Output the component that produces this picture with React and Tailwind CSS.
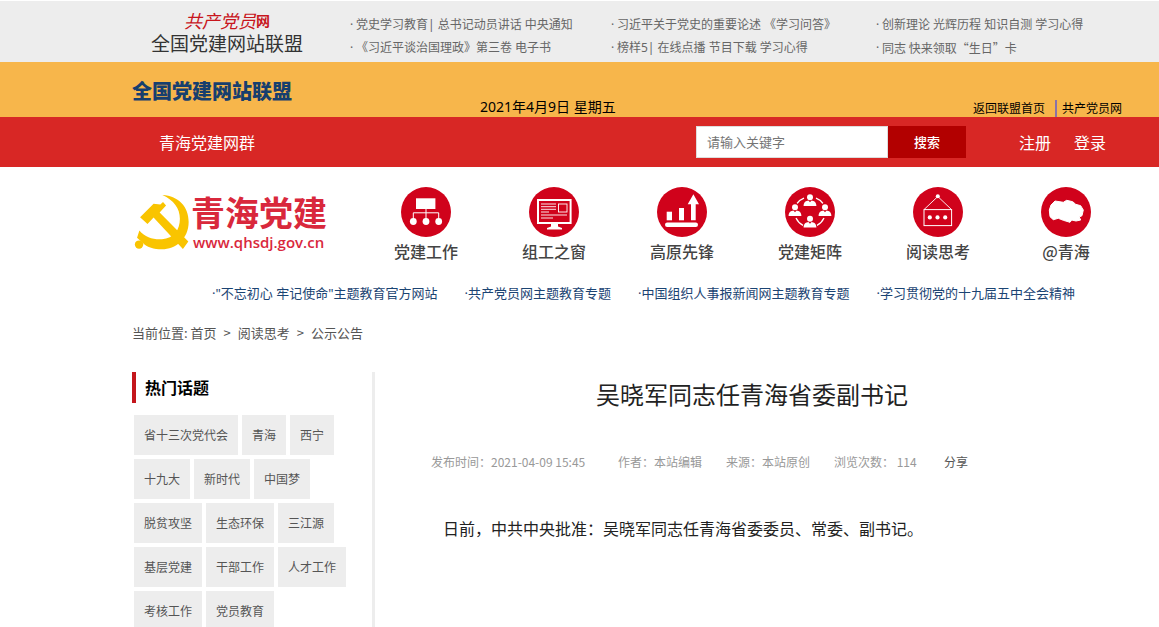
const topLinks = [
  ["党史学习教育| 总书记动员讲话 中央通知", "《习近平谈治国理政》第三卷 电子书"],
  ["习近平关于党史的重要论述 《学习问答》", "榜样5| 在线点播 节目下载 学习心得"],
  ["创新理论 光辉历程 知识自测 学习心得", "同志 快来领取“生日”卡"],
];

const themeLinks = [
  '"不忘初心 牢记使命"主题教育官方网站',
  "共产党员网主题教育专题",
  "中国组织人事报新闻网主题教育专题",
  "学习贯彻党的十九届五中全会精神",
];

const topics = [
  "省十三次党代会",
  "青海",
  "西宁",
  "十九大",
  "新时代",
  "中国梦",
  "脱贫攻坚",
  "生态环保",
  "三江源",
  "基层党建",
  "干部工作",
  "人才工作",
  "考核工作",
  "党员教育",
];

const Person = ({ x, y }) => (
  <g transform={`translate(${x} ${y})`}>
    <circle cx="0" cy="-3.4" r="4.2" fill="#d0021b" />
    <circle cx="0" cy="-3.2" r="3" fill="#fff" />
    <path d="M-6.4 5.4C-6.4 1.6-3.8.2-1.6 0L0 1.8 1.6 0C3.8.2 6.4 1.6 6.4 5.4z" fill="#fff" />
  </g>
);

const navItems = [
  {
    label: "党建工作",
    icon: (
      <>
        <rect x="15" y="11.3" width="19.4" height="10.7" fill="#fff" />
        <path d="M12.3 32v-6.2h25.4V32M25 21v11" fill="none" stroke="#fff" strokeWidth="1" />
        <circle cx="12.3" cy="34.5" r="3.4" fill="#fff" />
        <circle cx="25" cy="34.5" r="3.4" fill="#fff" />
        <circle cx="37.7" cy="34.5" r="3.4" fill="#fff" />
      </>
    ),
  },
  {
    label: "组工之窗",
    icon: (
      <>
        <rect x="9" y="13" width="32.6" height="23" fill="none" stroke="#fff" strokeWidth="2" />
        <path d="M22 36h7v3.5l4 1.5v1.4H18V41l4-1.5z" fill="#fff" />
        <path d="M12 17h15M12 19.7h15M12 22.3h15M12 25h8M12 28h26M12 31h12" stroke="#fff" strokeWidth="0.9" />
        <rect x="29.5" y="17" width="8.5" height="8" fill="none" stroke="#fff" strokeWidth="0.9" />
      </>
    ),
  },
  {
    label: "高原先锋",
    icon: (
      <>
        <rect x="9.7" y="24.7" width="5.3" height="8.6" fill="#fff" />
        <rect x="22" y="21" width="5" height="12.3" fill="#fff" />
        <path d="M34 33.3v-16h-3.3L36.4 7.3 42 17.3h-3.3v16z" fill="#fff" />
        <rect x="8" y="35.6" width="33" height="4.4" rx="2.2" fill="#fff" />
      </>
    ),
  },
  {
    label: "党建矩阵",
    icon: (
      <>
        <path
          d="M12 16.5A15.5 15.5 0 0 1 19 11.2M31 11.2A15.5 15.5 0 0 1 38 16.5M11 31A15.5 15.5 0 0 0 18 38.3M39 31A15.5 15.5 0 0 1 32 38.3"
          fill="none"
          stroke="#fff"
          strokeWidth="1.3"
        />
        <Person x={25} y={13.5} />
        <Person x={10} y={23.5} />
        <Person x={40} y={23.5} />
        <Person x={25} y={35} />
      </>
    ),
  },
  {
    label: "阅读思考",
    icon: (
      <>
        <rect x="11" y="22.6" width="27.6" height="16" fill="none" stroke="#fff" strokeWidth="1" />
        <path d="M11 22.6 24.8 9.5l13.8 13.1" fill="none" stroke="#fff" strokeWidth="0.9" />
        <circle cx="24.8" cy="9.3" r="2" fill="#fff" />
        <circle cx="16.8" cy="30.4" r="2.1" fill="#fff" />
        <circle cx="24.5" cy="30.4" r="2.1" fill="#fff" />
        <circle cx="32.2" cy="30.4" r="2.1" fill="#fff" />
      </>
    ),
  },
  {
    label: "@青海",
    icon: (
      <path
        d="M8.3 23L10 18 14 14 22.3 15.3 25.7 13.3 31.7 14.7 34.7 17.3 39.7 18.7 42.3 23 41 28.7 38.3 30 39.7 33 35 34 30.7 33 29 35.3 22.3 33.3 17.3 31.3 12.3 32.7 9 29.7Z"
        fill="#fff"
        stroke="#fff"
        strokeLinejoin="round"
      />
    ),
  },
];

const TopBar = () => (
  <div className="flex border-t border-white bg-[#ededed] pb-[3px]">
    <a href="#" className="w-[350px] shrink-0 pt-2 pl-[151px]">
      <span className="flex h-[22px] w-[152px] items-center justify-center leading-5 text-[#c8161d]">
        <span className="text-[18px] italic">共产党员</span>
        <span className="text-[14px] font-bold">网</span>
      </span>
      <span className="block w-[152px] text-[19px] leading-6 whitespace-nowrap text-[#333]">全国党建网站联盟</span>
    </a>
    <div className="grid flex-1 grid-cols-[261px_265px_1fr] pt-3 text-[12px] leading-[23px] whitespace-nowrap text-[#666]">
      {topLinks.map((column, i) => (
        <ul key={i} className="font-['Noto_Sans','Noto_Sans_CJK_SC',sans-serif]">
          {column.map((text) => (
            <li key={text} className="flex">
              <span className="w-[6px]">·</span>
              {/* curly quotes have to stay full width */}
              <a href="#" className={text.includes("“") ? "font-['Noto_Sans_CJK_SC',sans-serif]" : undefined}>
                {text}
              </a>
            </li>
          ))}
        </ul>
      ))}
    </div>
  </div>
);

const AllianceBar = () => (
  <div className="flex h-[55px] bg-[#f7b64b] pr-[37px] pl-[132px] text-black">
    <a href="#" className="w-[348px] pt-[17px] text-[20px] leading-6 font-black text-[#173f6e]">
      全国党建网站联盟
    </a>
    <p className="self-end font-['Noto_Sans','Noto_Sans_CJK_SC',sans-serif] text-[14px] leading-5">
      2021年4月9日 星期五
    </p>
    <div className="ml-auto flex self-end text-[12px] leading-[15px]">
      <a href="#" className="mr-[5px] border-r-2 border-[#8a72a8] pr-[10px] pb-[2px]">返回联盟首页</a>
      <a href="#">共产党员网</a>
    </div>
  </div>
);

const SearchBar = () => (
  <div className="flex h-[50px] items-center bg-[#d82725] pr-[53px] pl-[159px] text-[16px] text-white">
    <a href="#">青海党建网群</a>
    <form className="ml-auto flex h-8 text-[13px]" onSubmit={(e) => e.preventDefault()}>
      <input
        type="text"
        aria-label="请输入关键字"
        placeholder="请输入关键字"
        className="w-48 border border-[#ddd] bg-white px-[10px] text-[#333] outline-none placeholder:text-[#757575]"
      />
      <button type="submit" className="w-[78px] bg-[#b20000] font-medium">搜索</button>
    </form>
    <a href="#" className="ml-[53px]">注册</a>
    <a href="#" className="ml-[23px]">登录</a>
  </div>
);

const Emblem = () => (
  <svg viewBox="42 72 166 166" className="h-[56px] w-[56px]" fill="#f9c400" aria-hidden="true">
    <path d="M126 75C175 78 204 110 204 155C204 205 165 236 125 236C100 236 82 230 69 218L51 202L58 180C75 200 100 208 125 206C160 203 178 178 178 145C178 115 160 90 126 75Z" />
    <circle cx="57" cy="222" r="12.5" />
    <path d="M60 141L100 101L120 103L128 96L137 106L118 127L203 213L187 235L100 142L82 161Z" />
  </svg>
);

const SiteHeader = () => (
  <header className="flex pt-5 pr-[29px] pl-[134px]">
    <a href="#" className="flex w-[228px] shrink-0 pt-[7px] text-[#d9283c]">
      <Emblem />
      <span className="ml-px">
        <span className="block text-[34px] leading-9 font-bold">青海党建</span>
        <span className="block pl-[2px] font-['Open_Sans',sans-serif] text-[15px] leading-6 font-semibold">www.qhsdj.gov.cn</span>
      </span>
    </a>
    <nav className="grid flex-1 grid-cols-6">
      {navItems.map(({ label, icon }) => (
        <a key={label} href="#" className="flex flex-col items-center text-[16px] leading-7 font-medium text-[#444]">
          <svg viewBox="0 0 50 50" className="h-[50px] w-[50px]" aria-hidden="true">
            <circle cx="25" cy="25" r="25" fill="#d0021b" />
            {icon}
          </svg>
          {label}
        </a>
      ))}
    </nav>
  </header>
);

const Sidebar = () => (
  <aside className="w-[243px] shrink-0 border-r-3 border-[#ededed]">
    <h2 className="border-l-4 border-[#c4161c] pl-[9px] text-[16px] leading-[31px] font-bold text-black">热门话题</h2>
    <div className="mt-3 ml-[2px] flex flex-wrap gap-1">
      {topics.map((topic) => (
        <a key={topic} href="#" className="bg-[#ededed] px-[10px] text-[12px] leading-10 text-[#555]">
          {topic}
        </a>
      ))}
    </div>
  </aside>
);

const Article = () => (
  <article className="flex-1 pr-[30px]">
    <h1 className="pt-1 text-center text-[24px] leading-9 text-[#222]">吴晓军同志任青海省委副书记</h1>
    <div className="mt-10 flex pl-14 text-[12px] leading-5 whitespace-nowrap text-[#999]">
      <span className="w-[187px]">发布时间：2021-04-09 15:45</span>
      <span className="w-[108px]">作者：本站编辑</span>
      <span className="w-[108px]">来源：本站原创</span>
      <span className="w-[110px]">浏览次数： 114</span>
      <a href="#" className="text-[#555]">分享</a>
    </div>
    <p className="mt-10 pl-9 indent-8 text-[16px] leading-8 text-[#222]">
      日前，中共中央批准：吴晓军同志任青海省委委员、常委、副书记。
    </p>
  </article>
);

export default function App() {
  return (
    <div lang="zh-CN" className="flex min-h-screen flex-col bg-white font-['Noto_Sans_CJK_SC',sans-serif]">
      <TopBar />
      <AllianceBar />
      <SearchBar />
      <SiteHeader />
      <div className="mt-[18px] flex gap-[27px] pl-[212px] font-['Noto_Sans','Noto_Sans_CJK_SC',sans-serif] text-[13px] leading-5 whitespace-nowrap text-[#1b4473]">
        {themeLinks.map((text) => (
          <a key={text} href="#">·{text}</a>
        ))}
      </div>
      <div className="mt-5 flex gap-[7px] pl-[132px] text-[13px] leading-5 text-[#555]">
        <span>当前位置: <a href="#">首页</a></span>
        <span>&gt;</span>
        <a href="#">阅读思考</a>
        <span>&gt;</span>
        <a href="#">公示公告</a>
      </div>
      <main className="mt-[29px] flex flex-1 pl-[132px]">
        <Sidebar />
        <Article />
      </main>
    </div>
  );
}
